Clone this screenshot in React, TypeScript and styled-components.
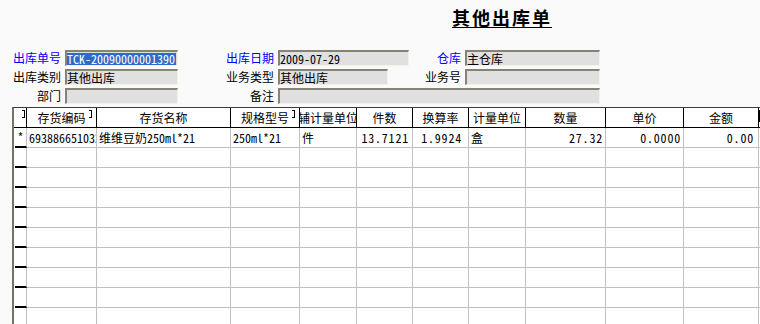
import React from 'react';
import styled, { createGlobalStyle } from 'styled-components';

const CJK = '"Noto Sans CJK SC", "Noto Sans", sans-serif';
const MONO = '"Noto Sans Mono CJK SC", "Liberation Mono", "Noto Sans CJK SC", monospace';

const GlobalStyle = createGlobalStyle`
    html, body {
        margin: 0;
        padding: 0;
        background: #fafafa;
    }
    body {
        font-family: ${CJK};
        font-size: 12px;
        color: #000;
    }
`;

const Page = styled.div`
    width: 760px;
    height: 324px;
    overflow: hidden;
    display: flex;
    flex-direction: column;
    background: #fafafa;
`;

const TitleBar = styled.div`
    height: 50px;
    box-sizing: border-box;
    padding: 6px 0 0 452px;
`;

const Title = styled.span`
    font-family: ${CJK};
    font-size: 18px;
    font-weight: 700;
    line-height: 22px;
    letter-spacing: 2px;
    text-decoration: underline;
    text-underline-offset: 2px;
`;

const Form = styled.div`
    display: grid;
    grid-template-columns: 65px 113px 100px 131px 56px 135px;
    grid-auto-rows: 16px;
    row-gap: 3px;
`;

const Label = styled.div<{ $blue?: boolean }>`
    text-align: right;
    padding-right: 4px;
    line-height: 15px;
    white-space: nowrap;
    color: ${(p) => (p.$blue ? '#0000ff' : '#000')};
`;

const Field = styled.div<{ $span?: number; $width?: number }>`
    grid-column: span ${(p) => p.$span ?? 1};
    width: ${(p) => (p.$width ? `${p.$width}px` : 'auto')};
    height: 16px;
    box-sizing: border-box;
    background: #e0e0e0;
    border-top: 2px solid #858276;
    border-left: 2px solid #858276;
    border-right: 1px solid #f3f2e8;
    border-bottom: 1px solid #f3f2e8;
    line-height: 13px;
    overflow: hidden;
    white-space: nowrap;
`;

const Mono = styled.span`
    font-family: ${MONO};
`;

const Selected = styled.span`
    display: inline-block;
    font-family: ${MONO};
    background: #316ac5;
    color: #fff;
    line-height: 12px;
    padding-right: 1px;
`;

const Table = styled.div`
    flex: 1;
    margin: 3px 0 0 12px;
    background: #fff;
    border-top: 1px solid #3c3c3c;
    border-left: 2px solid #76736a;
    overflow: hidden;
`;

const COLS = '13px 70px 134px 69px 57px 56px 56px 57px 80px 78px 75px 1fr';

const Row = styled.div`
    display: grid;
    grid-template-columns: ${COLS};
    height: 20px;
`;

// header cells; $tick draws the clipped glyph stub seen at some cell edges
const HeadCell = styled.div<{ $tick?: number }>`
    position: relative;
    box-sizing: border-box;
    display: flex;
    justify-content: center;
    align-items: center;
    border-right: 1px solid #000;
    border-bottom: 1px solid #000;
    overflow: hidden;
    white-space: nowrap;
    &::after {
        content: '';
        display: ${(p) => (p.$tick !== undefined ? 'block' : 'none')};
        position: absolute;
        top: 2px;
        right: ${(p) => p.$tick ?? 0}px;
        width: 2px;
        height: 6px;
        border-top: 1px solid #000;
        border-right: 1px solid #000;
        border-bottom: 1px solid #000;
    }
`;

const EdgeMark = styled.div`
    width: 3px;
    height: 12px;
    margin-top: 2px;
    background: #000;
`;

const LastHead = styled.div`
    border-bottom: 1px solid #000;
    display: flex;
    align-items: flex-start;
`;

const Cell = styled.div<{ $align?: 'left' | 'center' | 'right'; $num?: boolean; $pr?: number }>`
    box-sizing: border-box;
    border-right: 1px solid #c0c0c0;
    border-bottom: 1px solid #c0c0c0;
    overflow: hidden;
    white-space: nowrap;
    line-height: 19px;
    padding: 0 ${(p) => p.$pr ?? 3}px 0 2px;
    text-align: ${(p) => p.$align ?? 'left'};
    font-family: ${(p) => (p.$num ? MONO : CJK)};
    letter-spacing: ${(p) => (p.$num ? '0.8px' : 'normal')};
`;

const Indicator = styled.div`
    box-sizing: border-box;
    margin-left: 1px;
    border-right: 1px solid #c0c0c0;
    border-bottom: 2px solid #000;
    text-align: center;
    line-height: 18px;
    font-family: ${MONO};
`;

const Filler = styled.div`
    border-bottom: 1px solid #c0c0c0;
`;

const headers = ['存货编码', '存货名称', '规格型号', '辅计量单位', '件数', '换算率', '计量单位', '数量', '单价', '金额'];
const ticks: Record<number, number> = { 0: 4, 2: 4 };

type Line = {
    code: string;
    name: string;
    nameNo: string;
    spec: string;
    aux: string;
    pieces: string;
    rate: string;
    unit: string;
    qty: string;
    price: string;
    amount: string;
};

const lines: Line[] = [
    {
        code: '6938866510321',
        name: '维维豆奶',
        nameNo: '250ml*21',
        spec: '250ml*21',
        aux: '件',
        pieces: '13.7121',
        rate: '1.9924',
        unit: '盒',
        qty: '27.32',
        price: '0.0000',
        amount: '0.00',
    },
];

const EMPTY_ROWS = 9;

function DataRow({ line }: { line?: Line }) {
    return (
        <Row>
            <Indicator>{line ? '*' : ''}</Indicator>
            <Cell>{line && <Mono>{line.code}</Mono>}</Cell>
            <Cell>
                {line && (
                    <>
                        {line.name}
                        <Mono>{line.nameNo}</Mono>
                    </>
                )}
            </Cell>
            <Cell>{line && <Mono>{line.spec}</Mono>}</Cell>
            <Cell>{line?.aux}</Cell>
            <Cell $align='right' $num $pr={3}>{line?.pieces}</Cell>
            <Cell $align='right' $num $pr={6}>{line?.rate}</Cell>
            <Cell>{line?.unit}</Cell>
            <Cell $align='right' $num $pr={2}>{line?.qty}</Cell>
            <Cell $align='right' $num $pr={2}>{line?.price}</Cell>
            <Cell $align='right' $num $pr={4}>{line?.amount}</Cell>
            <Filler />
        </Row>
    );
}

export default function App() {
    return (
        <Page>
            <GlobalStyle />
            <TitleBar>
                <Title>其他出库单</Title>
            </TitleBar>
            <Form>
                <Label $blue>出库单号</Label>
                <Field>
                    <Selected>TCK-20090000001390</Selected>
                </Field>
                <Label $blue>出库日期</Label>
                <Field>
                    <Mono>2009-07-29</Mono>
                </Field>
                <Label $blue>仓库</Label>
                <Field>主仓库</Field>

                <Label>出库类别</Label>
                <Field>其他出库</Field>
                <Label>业务类型</Label>
                <Field $width={110}>其他出库</Field>
                <Label>业务号</Label>
                <Field />

                <Label>部门</Label>
                <Field />
                <Label>备注</Label>
                <Field $span={3} />
            </Form>
            <Table>
                <Row>
                    <HeadCell $tick={1} />
                    {headers.map((h, i) => (
                        <HeadCell key={h} $tick={ticks[i]}>
                            {h}
                        </HeadCell>
                    ))}
                    <LastHead>
                        <EdgeMark />
                    </LastHead>
                </Row>
                {lines.map((l) => (
                    <DataRow key={l.code} line={l} />
                ))}
                {Array.from({ length: EMPTY_ROWS }).map((_, i) => (
                    <DataRow key={i} />
                ))}
            </Table>
        </Page>
    );
}
